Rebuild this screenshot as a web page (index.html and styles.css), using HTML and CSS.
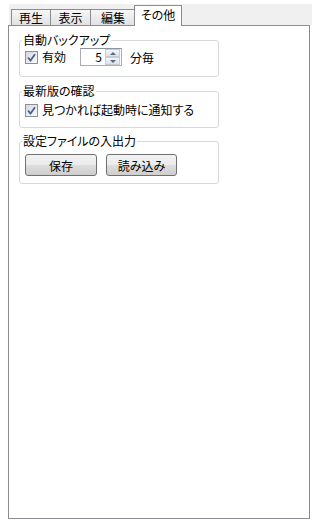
FILE: index.html
```html
<!DOCTYPE html>
<html lang="ja">

<head>
    <meta charset="UTF-8">
    <title>設定</title>
    <link rel="stylesheet" href="styles.css">
</head>

<body>

<div class="window">
    <div class="tab-strip">
        <div class="tab tab-1">再生</div>
        <div class="tab tab-2">表示</div>
        <div class="tab tab-3">編集</div>
        <div class="tab tab-active">その他</div>
    </div>

    <div class="panel">
        <fieldset class="group group-first">
            <legend>自動バックアップ</legend>
            <div class="row">
                <span class="check"><svg width="9" height="9" viewBox="0 0 9 9"><path d="M1 4.5 L3.5 7.5 L8 1.2" stroke="#4a5e94" stroke-width="1.8" fill="none"/></svg></span>
                <span class="label">有効</span>
                <span class="spin">
                    <span class="spin-value">5</span>
                    <span class="spin-buttons">
                        <span class="spin-btn"><span class="arrow-up"></span></span>
                        <span class="spin-btn"><span class="arrow-down"></span></span>
                    </span>
                </span>
                <span class="unit">分毎</span>
            </div>
        </fieldset>

        <fieldset class="group group-second">
            <legend>最新版の確認</legend>
            <div class="row row-check">
                <span class="check"><svg width="9" height="9" viewBox="0 0 9 9"><path d="M1 4.5 L3.5 7.5 L8 1.2" stroke="#4a5e94" stroke-width="1.8" fill="none"/></svg></span>
                <span class="label">見つかれば起動時に通知する</span>
            </div>
        </fieldset>

        <fieldset class="group group-third">
            <legend>設定ファイルの入出力</legend>
            <div class="row row-buttons">
                <button class="btn">保存</button>
                <button class="btn btn-load">読み込み</button>
            </div>
        </fieldset>
    </div>
</div>

</body>
</html>
```

FILE: styles.css
```css
body {
    margin: 0;
    background-color: #fff;
    font-family: "Noto Sans CJK JP", sans-serif;
    font-size: 12px;
    font-feature-settings: "palt";
    color: #000;
}

.window {
    padding: 4px 0 0 8px;
}

.tab-strip {
    display: flex;
    align-items: flex-end;
    margin-left: 1px;
    width: 303px;
    height: 21px;
    padding-left: 2px;
    box-sizing: border-box;
    background-color: #f0f0f0;
}

.tab {
    height: 16px;
    box-sizing: border-box;
    border: 1px solid #898c95;
    border-bottom: none;
    background: linear-gradient(#f6f6f6, #e2e2e2);
    text-align: center;
    line-height: 15px;
}

.tab-1 {
    width: 40px;
}

.tab-2 {
    width: 41px;
    margin-left: -1px;
}

.tab-3 {
    width: 46px;
    margin-left: -1px;
}

.tab-active {
    position: relative;
    z-index: 1;
    width: 48px;
    height: 21px;
    margin-left: -2px;
    margin-bottom: -1px;
    background: #fff;
    line-height: 18px;
}

.panel {
    width: 302px;
    height: 494px;
    box-sizing: border-box;
    border: 1px solid #898c95;
    background-color: #fff;
    padding-left: 10px;
}

.group {
    width: 200px;
    box-sizing: border-box;
    margin: 0;
    min-width: 0;
    border: 1px solid #d5d9de;
    border-radius: 3px;
    padding: 0 4px 10px 2px;
}

.group legend {
    padding: 0 1px;
    line-height: 14px;
}

.group-first {
    margin-top: 7px;
}

.group-second {
    margin-top: 7px;
    padding-bottom: 8px;
}

.group-third {
    margin-top: 6px;
    padding-bottom: 7px;
}

.row {
    display: flex;
    align-items: center;
    height: 18px;
    margin-top: 1px;
}

.row-check {
    margin-top: 3px;
}

.row-buttons {
    height: 22px;
    margin-top: 6px;
    gap: 9px;
}

.check {
    display: flex;
    align-items: center;
    justify-content: center;
    width: 13px;
    height: 13px;
    box-sizing: border-box;
    margin-left: 3px;
    border: 1px solid #8e8f8f;
    background: linear-gradient(135deg, #d4d7dc, #fbfbfb);
}

.label {
    margin-left: 4px;
    line-height: 18px;
}

.spin {
    display: flex;
    width: 42px;
    height: 18px;
    box-sizing: border-box;
    margin-left: 14px;
    border: 1px solid #abadb3;
    border-top-color: #8f939b;
    background: #fff;
}

.spin-value {
    flex: 1;
    text-align: right;
    padding-right: 3px;
    line-height: 16px;
}

.spin-buttons {
    display: flex;
    flex-direction: column;
    width: 15px;
    margin: 0 1px 0 0;
}

.spin-btn {
    flex: 1;
    display: flex;
    align-items: center;
    justify-content: center;
    border: 1px solid #c4cdd6;
    background: linear-gradient(#f2f6fa, #d9e2ea);
}

.arrow-up {
    width: 0;
    height: 0;
    border-left: 3px solid transparent;
    border-right: 3px solid transparent;
    border-bottom: 3px solid #5d6b7f;
}

.arrow-down {
    width: 0;
    height: 0;
    border-left: 3px solid transparent;
    border-right: 3px solid transparent;
    border-top: 3px solid #5d6b7f;
}

.unit {
    margin-left: 8px;
}

.btn {
    width: 72px;
    height: 22px;
    margin: 0 0 0 3px;
    padding: 0;
    border: 1px solid #707070;
    border-radius: 3px;
    background: linear-gradient(#f2f2f2 0%, #ebebeb 50%, #dddddd 51%, #cfcfcf 100%);
    font-family: inherit;
    font-size: 12px;
    font-feature-settings: "palt";
    color: #000;
}

.btn-load {
    width: 71px;
    margin-left: 0;
}
```
